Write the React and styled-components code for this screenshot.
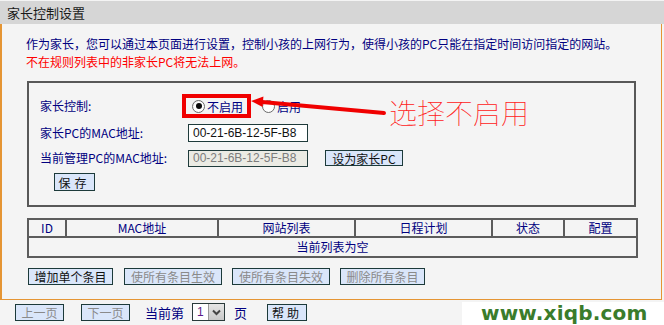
import styled, { createGlobalStyle } from 'styled-components'

const GlobalStyle = createGlobalStyle`
  body {
    margin: 0;
    background: #f4f4f4;
    font-family: "Noto Sans CJK SC", "Liberation Sans", sans-serif;
    font-size: 12px;
  }
`

const Page = styled.div`
  position: relative;
  width: 664px;
  height: 325px;
  overflow: hidden;
  background: #f4f4f4;
`

const TitleBar = styled.div`
  height: 23px;
  margin-top: 1px;
  background: #d6d6d6;
  padding-left: 7px;
  display: flex;
  align-items: center;
  font-size: 13px;
  color: #1a1a1a;
`

const Panel = styled.div`
  box-sizing: border-box;
  width: 662px;
  height: 276px;
  border-left: 2px solid #e59534;
  border-right: 1px solid #e59534;
  border-bottom: 1px solid #e59534;
  padding: 11px 0 0 24px;
`

const Line = styled.div`
  line-height: 18px;
  color: ${p => (p.$warn ? '#ff0000' : '#000080')};
  white-space: nowrap;
`

const Box = styled.div`
  box-sizing: border-box;
  width: 609px;
  height: 126px;
  margin: 10px 0 0 1px;
  border: 2px solid #585858;
  padding: 14px 0 0 11px;
`

const Row = styled.div`
  display: grid;
  grid-template-columns: 148px auto;
  align-items: center;
  height: 18px;
  margin-bottom: ${p => p.$after || 0}px;
`

const Label = styled.span`
  color: #000080;
  line-height: 18px;
`

const Field = styled.div`
  display: flex;
  align-items: center;
`

const RadioItem = styled.label`
  display: flex;
  align-items: center;
  margin-left: ${p => p.$offset || 0}px;
  color: #000080;
`

const RadioDot = styled.span`
  box-sizing: border-box;
  width: 13px;
  height: 13px;
  border-radius: 50%;
  border: 1px solid #6a6a6a;
  background: radial-gradient(circle at 60% 60%, #ffffff 55%, #dcdcdc 100%);
  margin-right: 2px;
  display: flex;
  align-items: center;
  justify-content: center;
  &::after {
    content: '';
    width: 6px;
    height: 6px;
    border-radius: 50%;
    background: ${p => (p.$on ? '#0a0a0a' : 'transparent')};
  }
`

const TextInput = styled.div`
  box-sizing: border-box;
  width: 120px;
  height: ${p => p.$h || 18}px;
  border: 1px solid #1f3b3b;
  background: ${p => (p.$disabled ? '#ebebe4' : '#fff')};
  color: ${p => (p.$disabled ? '#7c7c7c' : '#111')};
  font-family: "Liberation Sans", Arial, sans-serif;
  font-size: 12px;
  padding-left: 4px;
  display: flex;
  align-items: center;
`

const Btn = styled.button`
  box-sizing: border-box;
  width: ${p => p.$w}px;
  height: ${p => p.$h || 17}px;
  margin-left: ${p => p.$ml || 0}px;
  padding: 0;
  background: #dae6fa;
  border: 1px solid #1c3a3a;
  color: ${p => (p.$disabled ? '#8a8a8a' : '#111')};
  font-family: "Noto Sans CJK SC", "Liberation Sans", sans-serif;
  font-size: 12px;
  line-height: 15px;
  letter-spacing: ${p => p.$ls || 0}px;
  flex-shrink: 0;
`

const SaveWrap = styled.div`
  margin: 6px 0 0 14px;
`

const Table = styled.table`
  width: 609px;
  margin: 11px 0 0 1px;
  border-collapse: collapse;
  table-layout: fixed;
  border: 2px solid #545454;
`

const Cell = styled.td`
  border: 2px solid #5c5c5c;
  height: ${p => p.$h}px;
  padding: 0;
  text-align: center;
  color: #000080;
  line-height: 14px;
`

const ActionRow = styled.div`
  display: flex;
  gap: 10px;
  margin: 10px 0 0 2px;
`

const Pager = styled.div`
  display: flex;
  align-items: center;
  height: 18px;
  margin-top: 3px;
  padding-left: 15px;
`

const PagerText = styled.span`
  color: #000080;
  font-size: 13px;
  margin-left: ${p => p.$ml}px;
`

const Select = styled.div`
  box-sizing: border-box;
  display: flex;
  width: 33px;
  height: 18px;
  margin-left: 8px;
  border: 1px solid #2a3a3a;
  background: #fff;
`

const SelectValue = styled.span`
  flex: 1;
  color: #5a1a8a;
  font-family: "Liberation Sans", Arial, sans-serif;
  font-size: 12px;
  padding-left: 4px;
  line-height: 16px;
`

const SelectArrow = styled.span`
  width: 15px;
  background: linear-gradient(#e6e6e6, #c8c8c8);
  border-left: 1px solid #9a9a9a;
  display: flex;
  align-items: center;
  justify-content: center;
`

const Watermark = styled.div`
  position: absolute;
  left: 462px;
  top: 302px;
  width: 202px;
  height: 23px;
  background: #fff;
  padding-left: 19px;
  box-sizing: border-box;
  font-family: "DejaVu Sans", sans-serif;
  font-weight: bold;
  font-size: 20px;
  line-height: 22px;
  color: #3a7c2b;
  letter-spacing: 0.2px;
`

const Highlight = styled.div`
  position: absolute;
  left: 182px;
  top: 94px;
  width: 69px;
  height: 24px;
  box-sizing: border-box;
  border: 4px solid #f00000;
`

const ArrowSvg = styled.svg`
  position: absolute;
  left: 248px;
  top: 94px;
`

const Note = styled.div`
  position: absolute;
  left: 389px;
  top: 96px;
  font-size: 28px;
  line-height: 32px;
  font-weight: 100;
  color: #ff2020;
  white-space: nowrap;
`

export default function App() {
  return (
    <>
      <GlobalStyle />
      <Page>
        <TitleBar>家长控制设置</TitleBar>
        <Panel>
          <Line>作为家长，您可以通过本页面进行设置，控制小孩的上网行为，使得小孩的PC只能在指定时间访问指定的网站。</Line>
          <Line $warn>不在规则列表中的非家长PC将无法上网。</Line>
          <Box>
            <Row $after={9}>
              <Label>家长控制:</Label>
              <Field>
                <RadioItem $offset={4}>
                  <RadioDot $on />不启用
                </RadioItem>
                <RadioItem $offset={19}>
                  <RadioDot />启用
                </RadioItem>
              </Field>
            </Row>
            <Row $after={7}>
              <Label>家长PC的MAC地址:</Label>
              <Field>
                <TextInput>00-21-6B-12-5F-B8</TextInput>
              </Field>
            </Row>
            <Row>
              <Label>当前管理PC的MAC地址:</Label>
              <Field>
                <TextInput $disabled $h={17}>00-21-6B-12-5F-B8</TextInput>
                <Btn $w={78} $h={16} $ml={17}>设为家长PC</Btn>
              </Field>
            </Row>
            <SaveWrap>
              <Btn $w={41} $h={18} $ls={4}>保存</Btn>
            </SaveWrap>
          </Box>
          <Table>
            <colgroup>
              <col style={{ width: 38 }} />
              <col style={{ width: 152 }} />
              <col style={{ width: 137 }} />
              <col style={{ width: 137 }} />
              <col style={{ width: 72 }} />
              <col style={{ width: 73 }} />
            </colgroup>
            <tbody>
              <tr>
                <Cell $h={16}>ID</Cell>
                <Cell $h={16}>MAC地址</Cell>
                <Cell $h={16}>网站列表</Cell>
                <Cell $h={16}>日程计划</Cell>
                <Cell $h={16}>状态</Cell>
                <Cell $h={16}>配置</Cell>
              </tr>
              <tr>
                <Cell $h={18} colSpan={6}>当前列表为空</Cell>
              </tr>
            </tbody>
          </Table>
          <ActionRow>
            <Btn $w={85}>增加单个条目</Btn>
            <Btn $w={98} $ml={1} $disabled>使所有条目生效</Btn>
            <Btn $w={98} $disabled>使所有条目失效</Btn>
            <Btn $w={85} $disabled>删除所有条目</Btn>
          </ActionRow>
        </Panel>
        <Pager>
          <Btn $w={49} $disabled>上一页</Btn>
          <Btn $w={49} $ml={17} $disabled>下一页</Btn>
          <PagerText $ml={15}>当前第</PagerText>
          <Select>
            <SelectValue>1</SelectValue>
            <SelectArrow>
              <svg width="9" height="7" viewBox="0 0 9 7">
                <path d="M1 1.5 L4.5 5 L8 1.5" fill="none" stroke="#444" strokeWidth="2" />
              </svg>
            </SelectArrow>
          </Select>
          <PagerText $ml={9}>页</PagerText>
          <Btn $w={40} $ml={20} $ls={3}>帮助</Btn>
        </Pager>
        <Highlight />
        <ArrowSvg width="140" height="24" viewBox="0 0 140 24">
          <line x1="14" y1="8" x2="136" y2="19" stroke="#f00000" strokeWidth="4" strokeLinecap="round" />
          <polygon points="3,7 15.4,2.5 14.6,13" fill="#f00000" />
        </ArrowSvg>
        <Note>选择不启用</Note>
        <Watermark>www.xiqb.com</Watermark>
      </Page>
    </>
  )
}
